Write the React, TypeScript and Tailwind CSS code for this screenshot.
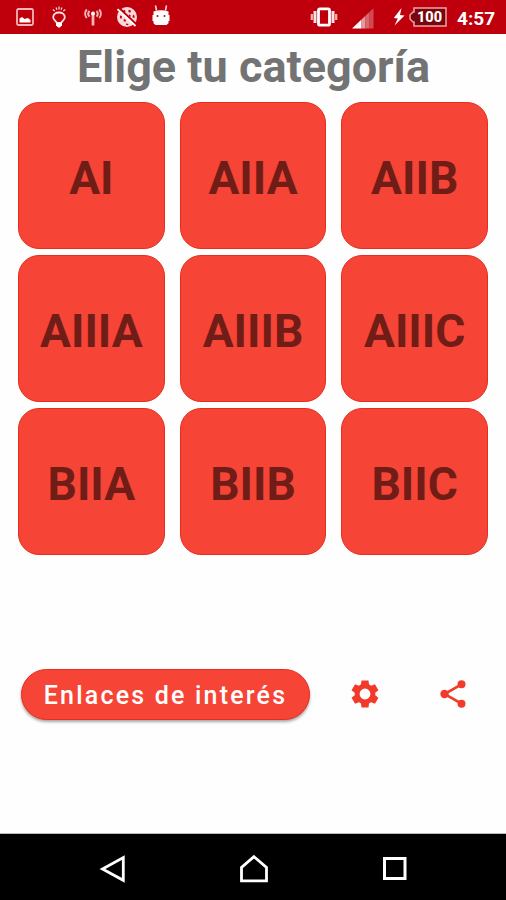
const categories = ['AI', 'AIIA', 'AIIB', 'AIIIA', 'AIIIB', 'AIIIC', 'BIIA', 'BIIB', 'BIIC']

const gearTeeth = [0, 60, 120]

function PictureIcon() {
  return (
    <svg viewBox="0 0 18 18" className="h-[18px] w-[18px]" fill="none">
      <rect x="1" y="1" width="16" height="16" rx="1.5" stroke="#f3b5b5" strokeWidth="1.8" />
      <path d="M3.500 14.500v-4l2.500-1.500 2.500 2 3.500-1 2.500 2v2.500z" fill="#fff" />
    </svg>
  )
}

function BulbIcon() {
  return (
    <svg viewBox="0 0 14 22" className="h-[22px] w-[14px]" fill="none" stroke="#fbe0e0">
      <path d="M7 .5v3M4 1.500l1 2.300M10 1.500l-1 2.300M.8 3.500l2 1.600M13.200 3.500l-2 1.600" strokeWidth="1.200" />
      <path d="M4.800 17C4 15 1.200 14 1.200 11.200 1.200 8.200 4 6.500 7 6.500s5.800 1.700 5.800 4.700c0 2.800-2.800 3.800-3.600 5.800z" strokeWidth="1.800" />
      <path d="M4 16.500h6v2.700L7.800 21.500H6.200L4 19.200z" fill="#fff" stroke="none" />
    </svg>
  )
}

function AntennaIcon() {
  return (
    <svg viewBox="0 0 18 18" className="h-[18px] w-[18px]" fill="none" stroke="#f3b5b5" strokeWidth="2">
      <path d="M2.800 1.500C.6 4 .6 7.500 2.800 10M15.200 1.500c2.200 2.500 2.200 6 0 8.500M5.500 3c-1.500 1.600-1.500 4 0 5.600M12.500 3c1.500 1.600 1.500 4 0 5.600" />
      <path d="M9 6v11.500" strokeWidth="2.800" />
      <circle cx="9" cy="5.500" r="2" fill="#fff" stroke="none" />
    </svg>
  )
}

function BlockedGlobeIcon() {
  return (
    <svg viewBox="0 0 22 22" className="h-[22px] w-[22px]" fill="none">
      <circle cx="11" cy="11" r="10" fill="#f9d9d9" />
      <path
        d="M7 4.500l2-.5.5 2-2 .8zM12.500 3.800l2.500.8-.5 2-2-.4zM4 9.500l2 .8-.5 2.500-1.500-.5zM17 8.500l1.500 1.200v2.300l-2-.5zM13 8.500l1.500.5v2l-1.500-.5zM7.800 13l2.200.8-.5 2-1.800-.5zM10 17.500l2.500.5-.5 1.200-2-.4z"
        fill="#bf000c"
      />
      <path d="M3 2l17.500 16.500" stroke="#bf000c" strokeWidth="2.200" />
      <path d="M1.500 3.200L19.500 20" stroke="#fff" strokeWidth="1.800" />
    </svg>
  )
}

function AndroidIcon() {
  return (
    <svg viewBox="0 0 18 22" className="h-[22px] w-[18px]" fill="none">
      <path d="M3.500 1.500l1 5M14.500 1.500l-1 5" stroke="#fbe0e0" strokeWidth="1.500" />
      <path d="M1.500 7.500Q9 5 16.500 7.500V11h1v6h-1v2.200L14.500 21h-11l-2-1.800V17h-1v-6h1z" fill="#fff" />
      <circle cx="5.500" cy="12" r="1" fill="#bf000c" />
      <circle cx="12.500" cy="12" r="1" fill="#bf000c" />
    </svg>
  )
}

function VibrateIcon() {
  return (
    <svg viewBox="0 0 28 20" className="h-5 w-7" fill="none">
      <rect x="8.500" y="1.800" width="11" height="16.400" rx="1.500" stroke="#fff" strokeWidth="2.800" />
      <path d="M5 4v12M23 4v12" stroke="#fbe0e0" strokeWidth="3" />
      <path d="M1.800 7v6M26.200 7v6" stroke="#f3b5b5" strokeWidth="2.200" />
    </svg>
  )
}

function SignalIcon() {
  return (
    <svg viewBox="0 0 22 21" className="h-[21px] w-[22px]">
      <path d="M0 20.500L9.500 11.500v9z" fill="#fff" />
      <path d="M9.500 20.500v-9l4-3.800v12.800z" fill="#e59a9d" />
      <path d="M13.500 20.500V7.700l4-3.700v16.500z" fill="#d9686d" />
      <path d="M17.500 20.500V4L21.500.3v20.200z" fill="#d04b50" />
    </svg>
  )
}

function BoltIcon() {
  return (
    <svg viewBox="0 0 12 18" className="h-[18px] w-3">
      <path d="M8.500 0L.8 10l4 .4L1.500 17.500 11.500 7.500l-4.500-.6z" fill="#fff" />
    </svg>
  )
}

function BatteryIcon() {
  return (
    <svg viewBox="0 0 38 20" className="h-5 w-[38px]">
      <path d="M5 1h32v18H5v-4H4l-3-3V8l3-3h1z" fill="#79060c" stroke="#eba5a8" strokeWidth="1.500" />
      <text x="20.500" y="15" textAnchor="middle" fill="#fff" fontSize="14.500" fontWeight="800" fontFamily="Roboto, sans-serif">
        100
      </text>
    </svg>
  )
}

function GearIcon() {
  return (
    <svg viewBox="-14 -14 28 28" className="h-7 w-7" fill="none">
      <circle r="7.900" stroke="#f23a2c" strokeWidth="5" />
      {gearTeeth.map((angle) => (
        <g key={angle} transform={`rotate(${angle})`} fill="#f23a2c">
          <path d="M-4.200-8l.7-5.500h7l.7 5.500zM-4.200 8l.7 5.500h7l.7-5.500z" />
        </g>
      ))}
    </svg>
  )
}

function ShareIcon() {
  return (
    <svg viewBox="0 0 28 30" className="h-[30px] w-7" fill="none">
      <path d="M22.500 5.300L5.500 15l17 9.700" stroke="#f23a2c" strokeWidth="2.600" />
      <circle cx="22.500" cy="5.300" r="4" fill="#f23a2c" />
      <circle cx="5.500" cy="15" r="4.200" fill="#f23a2c" />
      <circle cx="22.500" cy="24.700" r="4" fill="#f23a2c" />
    </svg>
  )
}

function StatusBar() {
  return (
    <header className="flex h-[34px] items-center bg-[#bf000c] pl-4">
      <div className="flex items-center">
        <PictureIcon />
        <div className="ml-[18px]"><BulbIcon /></div>
        <div className="ml-[18px]"><AntennaIcon /></div>
        <div className="ml-3.5"><BlockedGlobeIcon /></div>
        <div className="mb-1 ml-3.5"><AndroidIcon /></div>
      </div>
      <div className="ml-auto flex items-center pr-[11px]">
        <VibrateIcon />
        <div className="mt-0.5 ml-3.5"><SignalIcon /></div>
        <div className="ml-[19px]"><BoltIcon /></div>
        <div className="ml-1"><BatteryIcon /></div>
        <span className="mt-0.5 ml-2.5 w-[38px] text-[19px] leading-none font-bold whitespace-nowrap text-white">4:57</span>
      </div>
    </header>
  )
}

function NavBar() {
  return (
    <nav className="flex h-[67px] items-center justify-between border-t border-[#bbb] bg-black pt-[3px] pr-[97px] pl-[99px]">
      <svg viewBox="0 0 28 30" className="h-[30px] w-7" fill="none" stroke="#fff" strokeWidth="2.800">
        <path d="M24.300 3.500v22.800L3.500 15z" />
      </svg>
      <svg viewBox="0 0 30 30" className="h-[30px] w-[30px]" fill="none" stroke="#fff" strokeWidth="2.800">
        <path d="M15 2.700L27.500 13.500v13.300h-25V13.500z" />
      </svg>
      <svg viewBox="0 0 28 30" className="h-[30px] w-7" fill="none" stroke="#fff" strokeWidth="3">
        <rect x="3.500" y="4.500" width="20.500" height="20" />
      </svg>
    </nav>
  )
}

export default function App() {
  return (
    <div className="flex h-[900px] w-[506px] flex-col overflow-hidden bg-[#fefefe] font-['Roboto',sans-serif]">
      <StatusBar />
      <main className="flex flex-1 flex-col">
        <h1 className="h-[68px] pl-px text-center text-[45px] leading-[66px] font-bold whitespace-nowrap text-[#737373]">
          Elige tu categoría
        </h1>
        <div className="grid grid-cols-3 gap-x-[15px] gap-y-1.5 px-[18px]">
          {categories.map((name) => (
            <button
              key={name}
              className="h-[147px] rounded-[21px] border border-[#ea2c1c] bg-[#f64436] pt-[5px] text-[46px] font-bold text-[#701c17]"
            >
              {name}
            </button>
          ))}
        </div>
        <div className="mt-[114px] flex items-center pl-[21px]">
          <button className="h-[51px] w-[289px] rounded-full border border-[#ea2c1c] bg-[#f64436] pt-0.5 text-[25px] font-medium tracking-[2.2px] whitespace-nowrap text-white shadow-[0_2px_3px_rgba(0,0,0,0.35)]">
            Enlaces de interés
          </button>
          <button className="mb-px ml-[41px]" aria-label="Ajustes">
            <GearIcon />
          </button>
          <button className="mb-px ml-[60px]" aria-label="Compartir">
            <ShareIcon />
          </button>
        </div>
      </main>
      <NavBar />
    </div>
  )
}
